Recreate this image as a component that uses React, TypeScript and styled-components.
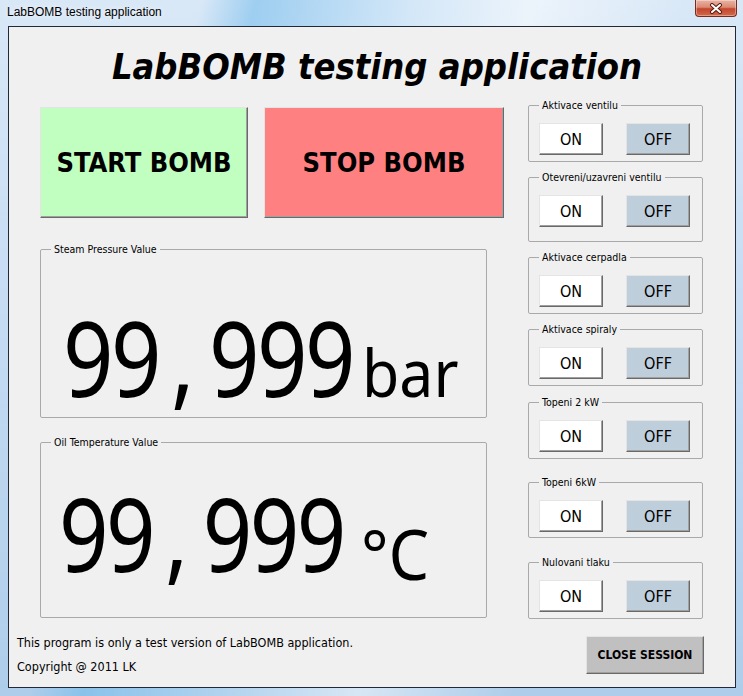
import styled, { createGlobalStyle } from "styled-components";

const GlobalStyle = createGlobalStyle`
  html, body {
    margin: 0;
    padding: 0;
    background: #ffffff;
  }
  body {
    width: 743px;
    height: 696px;
    overflow: hidden;
  }
  * {
    box-sizing: border-box;
  }
`;

const UI_FONT = `"DejaVu Sans Condensed", "DejaVu Sans", Tahoma, sans-serif`;

const Window = styled.div`
    width: 743px;
    height: 696px;
    display: flex;
    flex-direction: column;
    background:
        linear-gradient(104deg, rgba(255, 255, 255, 0) 22%, rgba(110, 185, 235, 0.55) 28%, rgba(200, 230, 250, 0.3) 45%, rgba(255, 255, 255, 0.5) 58%, rgba(255, 255, 255, 0) 75%),
        linear-gradient(180deg, #d9e8f7 0%, #c3daf2 50%, #aecdea 100%);
`;

const TitleBar = styled.div`
    height: 26px;
    flex: none;
    display: flex;
    align-items: flex-start;
    justify-content: space-between;
    padding: 0 6px 0 7px;
`;

const WindowTitle = styled.span`
    font-family: "Liberation Sans", Arial, sans-serif;
    font-size: 12px;
    line-height: 24px;
    color: #000;
    text-shadow: 0 0 6px rgba(255, 255, 255, 0.9);
`;

const CloseBox = styled.div`
    width: 42px;
    height: 17px;
    display: flex;
    align-items: center;
    justify-content: center;
    border: 1px solid #7a2a1c;
    border-top: none;
    border-radius: 0 0 4px 4px;
    background: linear-gradient(180deg, #eab4a6 0%, #dc8a74 45%, #c4452c 55%, #d2694c 100%);
    box-shadow: inset 0 0 0 1px rgba(255, 255, 255, 0.35);
`;

const Client = styled.div`
    flex: 1;
    margin: 0 7px 8px 8px;
    border: 1px solid #1f2a36;
    background: #f0f0f0;
    display: flex;
    flex-direction: column;
`;

const Heading = styled.h1`
    margin: 18px 0 0;
    padding-left: 10px;
    text-align: center;
    font-family: ${UI_FONT};
    font-weight: bold;
    font-style: italic;
    font-size: 36px;
    line-height: 44px;
    color: #000;
`;

const Main = styled.div`
    display: flex;
    align-items: flex-start;
    margin-top: 10px;
    padding-left: 31px;
`;

const LeftColumn = styled.div`
    width: 464px;
    padding-top: 8px;
    display: flex;
    flex-direction: column;
`;

const BombRow = styled.div`
    display: flex;
    gap: 16px;
    height: 111px;
`;

const RaisedButton = styled.button`
    margin: 0;
    padding: 0;
    border: 1px solid;
    border-color: #e4e4e4 #696969 #696969 #e4e4e4;
    box-shadow: inset -1px -1px 0 #a0a0a0;
    color: #000;
    cursor: pointer;
`;

const BombButton = styled(RaisedButton)<{ $bg: string; $w: number }>`
    width: ${(p) => p.$w}px;
    height: 100%;
    background: ${(p) => p.$bg};
    font-family: ${UI_FONT};
    font-weight: bold;
    font-size: 27px;
`;

const Group = styled.fieldset<{ $top: number; $w: number; $h: number; $pad?: number }>`
    margin: ${(p) => p.$top}px 0 0;
    width: ${(p) => p.$w}px;
    height: ${(p) => p.$h}px;
    min-width: 0;
    border: 1px solid #a9a9a9;
    border-radius: 2px;
    padding: ${(p) => p.$pad ?? 11}px 10px 0;
`;

const Caption = styled.legend`
    padding: 0 3px;
    font-family: ${UI_FONT};
    font-size: 10.5px;
    line-height: 13px;
    color: #000;
`;

const Reading = styled.div<{ $top: number; $left: number; $size: number }>`
    margin: ${(p) => p.$top}px 0 0 ${(p) => p.$left}px;
    font-family: "Noto Sans", "Open Sans", sans-serif;
    font-size: ${(p) => p.$size}px;
    line-height: ${(p) => p.$size}px;
    color: #000;
    white-space: nowrap;
`;

/* the digits of the reading are drawn narrow, as in the original panel */
const DigitsBox = styled.span<{ $w: number }>`
    display: inline-block;
    width: ${(p) => p.$w}px;
`;

const Digits = styled.span`
    display: inline-block;
    letter-spacing: -3px;
    transform: scaleX(0.85);
    transform-origin: left center;
`;

const Comma = styled.span`
    margin: 0 20px 0 14px;
`;

const Unit = styled.span<{ $size: number; $drop: number }>`
    display: inline-block;
    font-size: ${(p) => p.$size}px;
    line-height: 1;
    vertical-align: ${(p) => -p.$drop}px;
    transform: scaleX(0.92);
    transform-origin: left center;
`;

const RightColumn = styled.div`
    width: 175px;
    margin-left: 24px;
    display: flex;
    flex-direction: column;
`;

const ButtonRow = styled.div`
    display: flex;
    gap: 23px;
`;

const SwitchButton = styled(RaisedButton)<{ $off?: boolean }>`
    width: 64px;
    height: 32px;
    background: ${(p) => (p.$off ? "#bfcedb" : "#ffffff")};
    font-family: ${UI_FONT};
    font-size: 16px;
`;

const Footer = styled.div`
    display: flex;
    justify-content: space-between;
    align-items: flex-start;
    margin-top: 12px;
    padding: 0 31px 0 8px;
`;

const Notes = styled.div`
    font-family: ${UI_FONT};
    font-size: 12.5px;
    line-height: 24px;
    color: #000;
`;

const SessionButton = styled(RaisedButton)`
    width: 118px;
    height: 38px;
    margin-top: 5px;
    background: #c0c0c0;
    font-family: ${UI_FONT};
    font-weight: bold;
    font-size: 12px;
`;

const controls = [
    { label: "Aktivace ventilu", top: 0, h: 63 },
    { label: "Otevreni/uzavreni ventilu", top: 9, h: 71 },
    { label: "Aktivace cerpadla", top: 9, h: 63 },
    { label: "Aktivace spiraly", top: 9, h: 63 },
    { label: "Topeni 2 kW", top: 10, h: 63 },
    { label: "Topeni 6kW", top: 17, h: 62 },
    { label: "Nulovani tlaku", top: 18, h: 63 },
];

const CloseIcon = () => (
    <svg width="14" height="11" viewBox="0 0 14 11">
        <path d="M3 2 L11 9 M11 2 L3 9" stroke="#5a1a10" strokeWidth="4" strokeLinecap="round" />
        <path d="M3 2 L11 9 M11 2 L3 9" stroke="#ffffff" strokeWidth="2" strokeLinecap="round" />
    </svg>
);

const App = () => {
    return (
        <>
            <GlobalStyle />
            <Window>
                <TitleBar>
                    <WindowTitle>LabBOMB testing application</WindowTitle>
                    <CloseBox>
                        <CloseIcon />
                    </CloseBox>
                </TitleBar>
                <Client>
                    <Heading>LabBOMB testing application</Heading>
                    <Main>
                        <LeftColumn>
                            <BombRow>
                                <BombButton $bg="#c0ffc0" $w={208}>
                                    START BOMB
                                </BombButton>
                                <BombButton $bg="#ff8080" $w={240}>
                                    STOP BOMB
                                </BombButton>
                            </BombRow>
                            <Group $top={25} $w={447} $h={175} $pad={0}>
                                <Caption>Steam Pressure Value</Caption>
                                <Reading $top={49} $left={12} $size={104}>
                                    <DigitsBox $w={299}>
                                        <Digits>
                                            99<Comma>,</Comma>999
                                        </Digits>
                                    </DigitsBox>
                                    <Unit $size={66} $drop={0}>
                                        bar
                                    </Unit>
                                </Reading>
                            </Group>
                            <Group $top={18} $w={447} $h={182} $pad={0}>
                                <Caption>Oil Temperature Value</Caption>
                                <Reading $top={33} $left={8} $size={102}>
                                    <DigitsBox $w={302}>
                                        <Digits>
                                            99<Comma>,</Comma>999
                                        </Digits>
                                    </DigitsBox>
                                    <Unit $size={70} $drop={8}>
                                        °C
                                    </Unit>
                                </Reading>
                            </Group>
                        </LeftColumn>
                        <RightColumn>
                            {controls.map((c) => (
                                <Group key={c.label} $top={c.top} $w={175} $h={c.h}>
                                    <Caption>{c.label}</Caption>
                                    <ButtonRow>
                                        <SwitchButton>ON</SwitchButton>
                                        <SwitchButton $off>OFF</SwitchButton>
                                    </ButtonRow>
                                </Group>
                            ))}
                        </RightColumn>
                    </Main>
                    <Footer>
                        <Notes>
                            <div>This program is only a test version of LabBOMB application.</div>
                            <div>Copyright @ 2011 LK</div>
                        </Notes>
                        <SessionButton>CLOSE SESSION</SessionButton>
                    </Footer>
                </Client>
            </Window>
        </>
    );
};

export default App;
